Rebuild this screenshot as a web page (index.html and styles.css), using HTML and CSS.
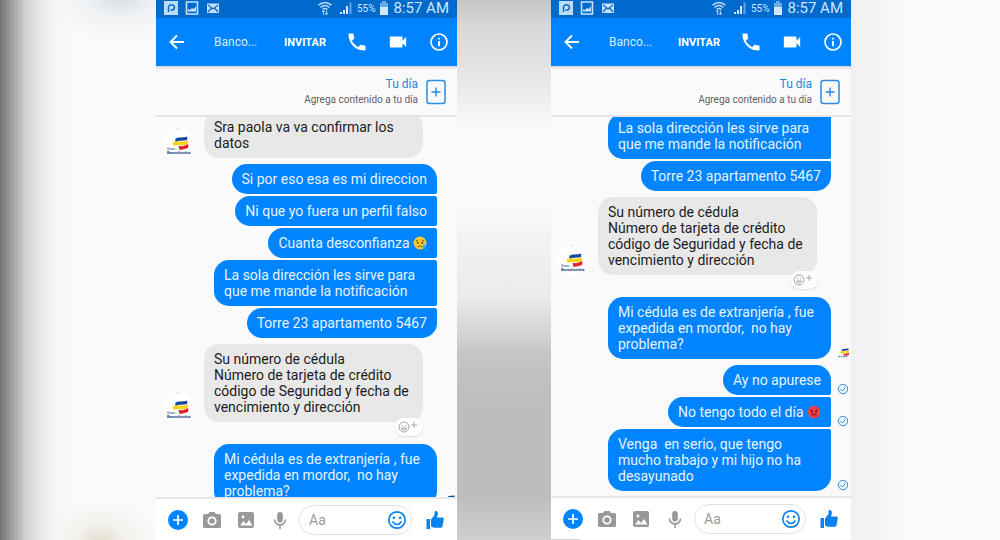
FILE: index.html
```html
<!DOCTYPE html>
<html lang="es">
<head>
<meta charset="utf-8">
<title>Banco – conversación</title>
<link rel="stylesheet" href="styles.css">
</head>
<body>
<svg class="defs" aria-hidden="true">
  <symbol id="app" viewBox="0 0 14 14"><rect width="14" height="14" fill="#b9dcf8"/><path d="M4.500 11V7A3 2.800 0 1 1 7.500 9.300H6.500" fill="none" stroke="#0969c8" stroke-width="1.500"/></symbol>
  <symbol id="shot" viewBox="0 0 14 14"><path d="M1.500 1h11v12h-11z" fill="none" stroke="#c5e2fb" stroke-width="1.600"/><path d="M3 10.500V8l2 1 2-2 2 1 2-3v5.500z" fill="#c5e2fb"/></symbol>
  <symbol id="mail" viewBox="0 0 14 14"><rect x="1" y="2.500" width="12" height="9.500" fill="#c5e2fb"/><path d="M2 4l5 4 5-4M2 11l3.500-4M12 11 8.500 7" fill="none" stroke="#0969c8" stroke-width="1.200"/></symbol>
  <symbol id="wifi" viewBox="0 0 14 14"><path d="M.5 4.200Q7-1.200 13.500 4.200M2.500 6.500Q7 2.500 11.500 6.500M4.500 8.500Q7 6.500 9.500 8.500" fill="none" stroke="#b9dcf8" stroke-width="1.500"/><path d="M5.500 14V9.500M4 11l1.500-1.800L7 11M8.500 9.500V13.500M7 12l1.500 2 1.500-2" fill="none" stroke="#9fcdf3"/></symbol>
  <symbol id="signal" viewBox="0 0 14 14"><path d="M1 13v-2h2v2zM4 13V9h2v4zM7 13V5h2v8z" fill="#d4eafd"/><path d="M10.500 13V1.500h2V13z" fill="#5ea7e6"/></symbol>
  <symbol id="battery" viewBox="0 0 10 14"><path d="M3 0h4v2h2v12H1V2h2z" fill="#68ade8"/><path d="M1 6h8v8H1z" fill="#cfe7fb"/></symbol>
  <symbol id="back" viewBox="0 0 20 20"><path d="M17 10H4M10 3.500 3.500 10l6.500 6.500" fill="none" stroke="#fff" stroke-width="1.800"/></symbol>
  <symbol id="phone" viewBox="1.500 1.500 21 21"><path fill="#fff" d="M6.600 10.800c1.400 2.800 3.800 5.100 6.600 6.600l2.200-2.200c.3-.3.700-.4 1-.2 1.100.4 2.300.6 3.600.6.600 0 1 .4 1 1V20c0 .600-.4 1-1 1C10.600 21 3 13.400 3 4c0-.6.400-1 1-1h3.500c.6 0 1 .4 1 1 0 1.200.2 2.500.6 3.600.1.300 0 .7-.2 1z"/></symbol>
  <symbol id="video" viewBox="1 1 22 22"><path fill="#fff" d="M17 10.500V7c0-.6-.4-1-1-1H4c-.6 0-1 .4-1 1v10c0 .600.400 1 1 1h12c.600 0 1-.4 1-1v-3.500l4 4v-11z"/></symbol>
  <symbol id="info" viewBox="0 0 20 20"><circle cx="10" cy="10" r="8" fill="none" stroke="#fff" stroke-width="1.700"/><path d="M9.100 9h1.800v5.200H9.100zM9.100 5.800h1.800v1.800H9.100z" fill="#fff"/></symbol>
  <symbol id="addday" viewBox="0 0 20 26"><rect x="1" y="1.500" width="18" height="23" rx="2.500" fill="none" stroke="#2a8be0" stroke-width="1.500"/><path d="M10 8.500v9M5.500 13h9" stroke="#2a8be0" stroke-width="1.500"/></symbol>
  <symbol id="stripes" viewBox="0 0 22 13"><path d="M9 2.500C12 .5 16 2 20 .5v3.300C16 5 12 4 9 5.500z" fill="#174a9c"/><path d="M6.500 6C11 4 15 6.500 20.500 4v3.500C15 10 11 7 7.500 9.500z" fill="#f9d313"/><path d="M12 9c3 1 6 0 9-1.500V11c-3 1.500-6 2-8.500 1.500z" fill="#e3222c"/></symbol>
  <symbol id="avatar" viewBox="0 0 30 30"><circle cx="15" cy="15" r="15" fill="#fff"/><path d="M13 1h4" stroke="#ddd"/><use href="#stripes" x="2" y="8" width="25" height="14"/><text x="4" y="22" class="brand">Gran</text><text x="4" y="26" class="brand brand-b">Bancolombia</text></symbol>
  <symbol id="seen" viewBox="0 0 12 12"><use href="#stripes" x="-1" y="1" width="14" height="8"/><path d="M1 9.500h10" stroke="#8496b8" stroke-width="1.400" stroke-dasharray="2 .5"/></symbol>
  <symbol id="sent" viewBox="0 0 12 12"><circle cx="6" cy="6" r="4.700" fill="none" stroke="#2e8be0"/><path d="M3.600 6.200 5.300 8l3.300-3.800" fill="none" stroke="#2e8be0"/></symbol>
  <symbol id="react" viewBox="0 0 22 12"><circle cx="6" cy="6" r="5" fill="none" stroke="#a5a5a5"/><path d="M4 4.800h1M7 4.800h1M3.500 7h5a2.500 2 0 0 1-5 0z" fill="none" stroke="#a5a5a5"/><path d="M16 1v6M13 4h6" stroke="#a5a5a5"/></symbol>
  <symbol id="sad" viewBox="0 0 14 14"><circle cx="7" cy="7" r="6.500" fill="#fbc92f"/><path d="M3 5l2-1M9 4l2 1M4.800 11q2.200-2.500 4.400 0" fill="none" stroke="#7c5414"/><circle cx="4.700" cy="6.800" r="1" fill="#5b3b10"/><circle cx="9.300" cy="6.800" r="1" fill="#5b3b10"/><path d="M11 7.500q3.500 5 0 5.500-3-.5 0-5.500z" fill="#42a9e6"/></symbol>
  <symbol id="angry" viewBox="0 0 14 14"><circle cx="7" cy="7" r="6.300" fill="#ee3f4b"/><path d="M3 4.500 6 6M11 4.500 8 6M4.500 10.500q2.500-2.500 5 0" fill="none" stroke="#8b1f2b" stroke-width="1.200"/><circle cx="4.800" cy="7" r=".9" fill="#6a1620"/><circle cx="9.200" cy="7" r=".9" fill="#6a1620"/></symbol>
  <symbol id="plus" viewBox="0 0 20 20"><circle cx="10" cy="10" r="10" fill="#0084ff"/><path d="M10 5v10M5 10h10" stroke="#fff" stroke-width="1.700"/></symbol>
  <symbol id="camera" viewBox="0 0 20 20"><path d="M2.500 4H6l1.500-2h5L14 4h3.500A1.500 1.500 0 0 1 19 5.500v11A1.500 1.500 0 0 1 17.500 18h-15A1.500 1.500 0 0 1 1 16.500v-11A1.500 1.500 0 0 1 2.500 4z" fill="#999"/><circle cx="10" cy="11" r="3.700" fill="#999" stroke="#fff" stroke-width="1.800"/></symbol>
  <symbol id="image" viewBox="0 0 20 20"><rect x="2" y="2" width="16" height="16" rx="2" fill="#999"/><path d="m4 15.500 3.500-4.500 2.500 3 3-4 3.500 5.500z" fill="#fff"/><circle cx="7" cy="7" r="1.400" fill="#fff"/></symbol>
  <symbol id="mic" viewBox="0 0 20 20"><rect x="7.200" y="2" width="5.600" height="10.500" rx="2.800" fill="#999"/><path d="M4.500 9.500a5.500 5.500 0 0 0 11 0M10 15v4" fill="none" stroke="#999" stroke-width="1.600"/></symbol>
  <symbol id="smile" viewBox="0 0 20 20"><circle cx="10" cy="10" r="8.200" fill="none" stroke="#0b82f0" stroke-width="1.700"/><circle cx="7" cy="7.800" r="1.300" fill="#0b82f0"/><circle cx="13" cy="7.800" r="1.300" fill="#0b82f0"/><path d="M5.500 11.500q4.500 6 9 0" fill="none" stroke="#0b82f0" stroke-width="1.700"/></symbol>
  <symbol id="like" viewBox="0 0 20 20"><path d="M1.500 9H5v10H1.500zM6 9.500 9.500 5V2Q9.700.8 11 1q2.500.5 1.700 4l-.7 2.500h5.500q1.500.2 1.300 1.700l-1.300 7q-.3 1.500-2 1.600H9L6 16.500z" fill="#0b82f0"/></symbol>
</svg>

<main class="stage">
  <section class="phone" aria-label="Primera captura">
    <div class="status">
      <span class="status-group"><svg class="i14"><use href="#app"/></svg><svg class="i14"><use href="#shot"/></svg><svg class="i14"><use href="#mail"/></svg></span>
      <span class="status-group status-right"><svg class="i14 wifi"><use href="#wifi"/></svg><svg class="i14"><use href="#signal"/></svg><span class="percent">55%</span><svg class="battery"><use href="#battery"/></svg><span class="clock">8:57 AM</span></span>
    </div>
    <header class="appbar">
      <button aria-label="Atrás"><svg class="i20"><use href="#back"/></svg></button>
      <h1 class="title">Banco...</h1>
      <button class="invite">INVITAR</button>
      <button aria-label="Llamar"><svg class="i20"><use href="#phone"/></svg></button>
      <button aria-label="Videollamada"><svg class="i20"><use href="#video"/></svg></button>
      <button aria-label="Información"><svg class="i20"><use href="#info"/></svg></button>
    </header>
    <div class="day">
      <div class="day-text"><strong class="day-title">Tu día</strong><span class="day-sub">Agrega contenido a tu día</span></div>
      <button aria-label="Agregar a tu día"><svg class="addday"><use href="#addday"/></svg></button>
    </div>
    <div class="chat">
      <div class="row in"><svg class="avatar"><use href="#avatar"/></svg><p class="bubble">Sra paola va va confirmar los
datos</p></div>
      <div class="group">
        <div class="row out"><p class="bubble first">Si por eso esa es mi direccion</p></div>
        <div class="row out"><p class="bubble mid">Ni que yo fuera un perfil falso</p></div>
        <div class="row out"><p class="bubble mid">Cuanta desconfianza <svg class="emoji" role="img" aria-label="triste"><use href="#sad"/></svg></p></div>
        <div class="row out"><p class="bubble mid wide">La sola dirección les sirve para
que me mande la notificación</p></div>
        <div class="row out"><p class="bubble last">Torre 23 apartamento 5467</p></div>
      </div>
      <div class="row in reacted"><svg class="avatar"><use href="#avatar"/></svg><p class="bubble">Su número de cédula
Número de tarjeta de crédito
código de Seguridad y fecha de
vencimiento y dirección</p><button class="react" aria-label="Reaccionar"><svg class="react-icon"><use href="#react"/></svg></button></div>
      <div class="row out"><p class="bubble wide">Mi cédula es de extranjería , fue
expedida en mordor,  no hay
problema?</p><svg class="mark"><use href="#seen"/></svg></div>
    </div>
    <form class="composer">
      <div class="tools">
        <button type="button" aria-label="Más"><svg class="i20"><use href="#plus"/></svg></button>
        <button type="button" aria-label="Cámara"><svg class="i20"><use href="#camera"/></svg></button>
        <button type="button" aria-label="Galería"><svg class="i20"><use href="#image"/></svg></button>
        <button type="button" aria-label="Micrófono"><svg class="i20"><use href="#mic"/></svg></button>
      </div>
      <div class="field"><input type="text" placeholder="Aa" aria-label="Mensaje"><button type="button" aria-label="Emoji"><svg class="i20"><use href="#smile"/></svg></button></div>
      <button type="button" aria-label="Me gusta"><svg class="i20"><use href="#like"/></svg></button>
    </form>
  </section>

  <section class="phone phone-b" aria-label="Segunda captura">
    <div class="status">
      <span class="status-group"><svg class="i14"><use href="#app"/></svg><svg class="i14"><use href="#shot"/></svg><svg class="i14"><use href="#mail"/></svg></span>
      <span class="status-group status-right"><svg class="i14 wifi"><use href="#wifi"/></svg><svg class="i14"><use href="#signal"/></svg><span class="percent">55%</span><svg class="battery"><use href="#battery"/></svg><span class="clock">8:57 AM</span></span>
    </div>
    <header class="appbar">
      <button aria-label="Atrás"><svg class="i20"><use href="#back"/></svg></button>
      <h1 class="title">Banco...</h1>
      <button class="invite">INVITAR</button>
      <button aria-label="Llamar"><svg class="i20"><use href="#phone"/></svg></button>
      <button aria-label="Videollamada"><svg class="i20"><use href="#video"/></svg></button>
      <button aria-label="Información"><svg class="i20"><use href="#info"/></svg></button>
    </header>
    <div class="day">
      <div class="day-text"><strong class="day-title">Tu día</strong><span class="day-sub">Agrega contenido a tu día</span></div>
      <button aria-label="Agregar a tu día"><svg class="addday"><use href="#addday"/></svg></button>
    </div>
    <div class="chat">
      <div class="group">
        <div class="row out"><p class="bubble mid wide">La sola dirección les sirve para
que me mande la notificación</p></div>
        <div class="row out"><p class="bubble last">Torre 23 apartamento 5467</p></div>
      </div>
      <div class="row in reacted"><svg class="avatar"><use href="#avatar"/></svg><p class="bubble">Su número de cédula
Número de tarjeta de crédito
código de Seguridad y fecha de
vencimiento y dirección</p><button class="react" aria-label="Reaccionar"><svg class="react-icon"><use href="#react"/></svg></button></div>
      <div class="row out"><p class="bubble wide">Mi cédula es de extranjería , fue
expedida en mordor,  no hay
problema?</p><svg class="mark"><use href="#seen"/></svg></div>
      <div class="group">
        <div class="row out"><p class="bubble first">Ay no apurese</p><svg class="mark"><use href="#sent"/></svg></div>
        <div class="row out"><p class="bubble mid">No tengo todo el día <svg class="emoji" role="img" aria-label="enojado"><use href="#angry"/></svg></p><svg class="mark"><use href="#sent"/></svg></div>
        <div class="row out"><p class="bubble last wide">Venga  en serio, que tengo
mucho trabajo y mi hijo no ha
desayunado</p><svg class="mark"><use href="#sent"/></svg></div>
      </div>
    </div>
    <form class="composer">
      <div class="tools">
        <button type="button" aria-label="Más"><svg class="i20"><use href="#plus"/></svg></button>
        <button type="button" aria-label="Cámara"><svg class="i20"><use href="#camera"/></svg></button>
        <button type="button" aria-label="Galería"><svg class="i20"><use href="#image"/></svg></button>
        <button type="button" aria-label="Micrófono"><svg class="i20"><use href="#mic"/></svg></button>
      </div>
      <div class="field"><input type="text" placeholder="Aa" aria-label="Mensaje"><button type="button" aria-label="Emoji"><svg class="i20"><use href="#smile"/></svg></button></div>
      <button type="button" aria-label="Me gusta"><svg class="i20"><use href="#like"/></svg></button>
    </form>
  </section>
</main>
</body>
</html>
```
FILE: styles.css
```css
* { box-sizing: border-box; }
body {
  margin: 0;
  font-family: Roboto, "Liberation Sans", sans-serif;
  background: #fafafa;
}
h1, p { margin: 0; }
svg { display: block; flex: none; }
button {
  border: 0;
  padding: 0;
  background: none;
  font: inherit;
  color: inherit;
  flex: none;
}
.defs { position: absolute; width: 0; height: 0; }
.i20 { width: 20px; height: 20px; }
.i14 { width: 14px; height: 14px; }

.stage {
  display: grid;
  grid-template-columns: 156fr 301fr 94fr 300fr 149fr;
  height: 100vh;
  background:
    linear-gradient(90deg, #747474 0, #a0a0a0 1.2%, #cfcfcf 2.5%, #e8e8e8 4%, #f5f5f5 5.5%, #fafafa00 7%) left / 100% 100% no-repeat,
    radial-gradient(ellipse 80px 40px at 12% 0, #d8dfe4, #e9edf0aa 40%, #fafafa00) no-repeat,
    radial-gradient(ellipse 60px 40px at 10% 100%, #e3dfd0, #efede6aa 40%, #fafafa00) no-repeat,
    linear-gradient(180deg, #c6c6c6 0, #d8d8d8 5%, #e8e8e8 15%, #fafafa 24%, #fafafa 38%, #f0f0f0 47%, #ebebeb 55%, #d9d9d9 60%, #c4c4c4 66%, #bdbdbd 76%, #bdbdbd 92%, #d0d0d0 100%) 50% 0 / 16% 100% no-repeat,
    linear-gradient(270deg, #fafafa 0, #fafafa 60%, #f0f0f0 100%) right / 15% 100% no-repeat,
    #fafafa;
}
.phone {
  grid-column: 2;
  display: flex;
  flex-direction: column;
  min-width: 0;
  min-height: 0;
  background: #fafafa;
}
.phone-b { grid-column: 4; margin-bottom: 1px; }

.status {
  display: flex;
  justify-content: space-between;
  height: 18px;
  padding: 0 8px;
  background: #0069cc;
  color: #cfe7fc;
}
.status-group { display: flex; align-items: center; gap: 7px; height: 16px; }
.status-right { gap: 4px; }
.wifi { margin-right: 3px; }
.battery { width: 10px; height: 14px; }
.percent { font-size: 10px; }
.clock { font-size: 15px; line-height: 16px; }

.appbar {
  display: flex;
  align-items: center;
  gap: 21px;
  height: 48px;
  padding: 0 8px 0 11px;
  background: #0084ff;
  color: #fff;
}
.title {
  flex: 1;
  padding-left: 6px;
  font-size: 12px;
  font-weight: 400;
  color: #d5eaff;
}
.invite { font-size: 11px; font-weight: 700; }

.day {
  display: flex;
  justify-content: flex-end;
  align-items: center;
  gap: 8px;
  height: 51px;
  padding: 2px 11px 0 0;
  border-bottom: 2px solid #e6e6e6;
  background: linear-gradient(#d4d4d4, #fafafa 4px);
}
.day-text { display: flex; flex-direction: column; align-items: flex-end; }
.day-title { font-size: 12px; line-height: 15px; font-weight: 400; color: #2a86d8; }
.day-sub { font-size: 10px; line-height: 15px; color: #626262; }
.addday { width: 20px; height: 26px; }

.chat {
  flex: 1;
  min-height: 0;
  display: flex;
  flex-direction: column;
  gap: 6px;
  overflow: hidden;
}
.chat > :first-child { margin-top: -5px; }
.phone-b .chat > :first-child { margin-top: -4px; }
.group { display: flex; flex-direction: column; gap: 2px; }
.row { display: flex; flex: none; align-items: flex-end; position: relative; }
.in { padding-left: 7px; gap: 11px; }
.out { justify-content: flex-end; padding-right: 20px; }
.phone-b .in { padding-left: 6px; }
.avatar { width: 30px; height: 30px; }
.brand { font-family: Roboto, sans-serif; font-size: 4px; fill: #24477f; }
.brand-b { font-weight: 700; }
.bubble {
  padding: 7px 10px;
  border-radius: 15px;
  font-size: 14px;
  line-height: 16px;
  white-space: pre-wrap;
}
.in .bubble { width: 219px; background: #e8e8e8; color: #1c1c1c; }
.out .bubble { background: #0084ff; color: #e6f3ff; max-width: 223px; }
.out .wide { width: 223px; }
.out .first { border-bottom-right-radius: 2px; }
.out .mid { border-top-right-radius: 2px; border-bottom-right-radius: 2px; }
.out .last { border-top-right-radius: 2px; }
.emoji { display: inline-block; width: 14px; height: 14px; vertical-align: -2px; }
.reacted { margin-bottom: 16px; }
.react {
  position: absolute;
  left: 239px;
  bottom: -14px;
  padding: 3px;
  border-radius: 10px;
  background: #fff;
  box-shadow: 0 1px 2px #ddd;
}
.react-icon { width: 22px; height: 12px; }
.mark { position: absolute; right: 2px; bottom: 0; width: 12px; height: 12px; }

.composer {
  display: flex;
  align-items: center;
  height: 43px;
  padding: 0 12px 0 12px;
  border-top: 2px solid #e8e8e8;
  background: #fff;
}
.tools { display: flex; gap: 14px; }
.field {
  flex: 1;
  min-width: 0;
  display: flex;
  align-items: center;
  height: 30px;
  margin: 0 13px 0 9px;
  padding: 0 4px 0 9px;
  border: 1px solid #e2e2e2;
  border-radius: 15px;
}
.field input {
  flex: 1;
  min-width: 0;
  width: 0;
  border: 0;
  padding: 0;
  outline: 0;
  background: none;
  font: 14px Roboto, sans-serif;
}
.field input::placeholder { color: #999; opacity: 1; }
```
